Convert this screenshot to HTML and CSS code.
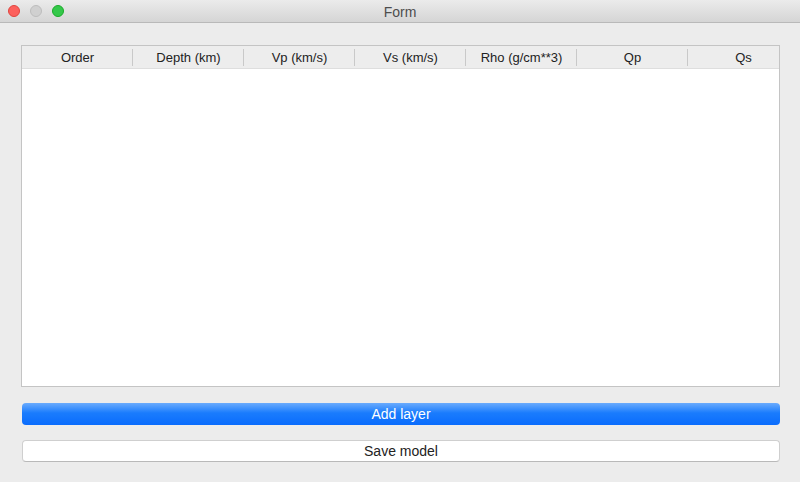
FILE: index.html
```html
<!DOCTYPE html>
<html lang="en">
<head>
    <meta charset="UTF-8">
    <title>Form</title>
    <link rel="stylesheet" href="styles.css">
</head>
<body>
    <div class="window">
        <div class="titlebar">
            <div class="lights">
                <span class="light red"></span>
                <span class="light gray"></span>
                <span class="light green"></span>
            </div>
            <div class="title">Form</div>
        </div>
        <div class="content">
            <div class="table">
                <div class="table-head">
                    <div class="th">Order</div>
                    <div class="th">Depth (km)</div>
                    <div class="th">Vp (km/s)</div>
                    <div class="th">Vs (km/s)</div>
                    <div class="th">Rho (g/cm**3)</div>
                    <div class="th">Qp</div>
                    <div class="th">Qs</div>
                </div>
                <div class="table-body"></div>
            </div>
            <button class="btn btn-default">Add layer</button>
            <button class="btn btn-plain">Save model</button>
        </div>
    </div>
</body>
</html>
```

FILE: styles.css
```css
body {
    margin: 0;
    font-family: "Liberation Sans", Arial, sans-serif;
    background: #ececec;
}
.window {
    width: 800px;
    height: 482px;
    display: flex;
    flex-direction: column;
    background: #ececec;
    overflow: hidden;
}
.titlebar {
    position: relative;
    height: 22px;
    flex: none;
    background: linear-gradient(to bottom, #ebebeb, #d5d5d5);
    border-bottom: 1px solid #b9b9b9;
    display: flex;
    align-items: center;
    justify-content: center;
}
.lights {
    position: absolute;
    left: 8px;
    top: 5px;
    display: flex;
    gap: 10px;
}
.light {
    width: 12px;
    height: 12px;
    border-radius: 50%;
    box-sizing: border-box;
}
.red { background: #fc605c; border: 1px solid #e0443e; }
.gray { background: #d0d0d0; border: 1px solid #bdbdbd; }
.green { background: #34c84a; border: 1px solid #1aab29; }
.title {
    font-size: 14px;
    color: #4d4d4d;
    padding-top: 1px;
}
.content {
    flex: 1;
    padding: 22px 20px 0 21px;
    display: flex;
    flex-direction: column;
}
.table {
    height: 340px;
    border: 1px solid #c4c4c4;
    background: #fff;
    display: flex;
    flex-direction: column;
    overflow: hidden;
}
.table-head {
    height: 22px;
    flex: none;
    display: flex;
    background: #ededed;
    border-bottom: 1px solid #dedede;
}
.th {
    width: 111px;
    flex: none;
    font-size: 13px;
    color: #222;
    display: flex;
    align-items: center;
    justify-content: center;
    position: relative;
}
.th + .th::before {
    content: "";
    position: absolute;
    left: -1px;
    top: 3px;
    bottom: 2px;
    width: 1px;
    background: #c9c9c9;
}
.table-body {
    flex: 1;
}
.btn {
    height: 22px;
    border-radius: 4px;
    font-family: inherit;
    font-size: 14px;
    padding: 0;
    box-sizing: border-box;
    width: 758px;
    margin-left: 1px;
}
.btn-default {
    margin-top: 16px;
    color: #fff;
    border: none;
    background: linear-gradient(to bottom, #6aabfd, #1a7cfd 45%, #0a6cfd);
}
.btn-plain {
    margin-top: 15px;
    color: #222;
    background: #fff;
    border: 1px solid #cfcfcf;
    border-bottom-color: #b9b9b9;
}
```
